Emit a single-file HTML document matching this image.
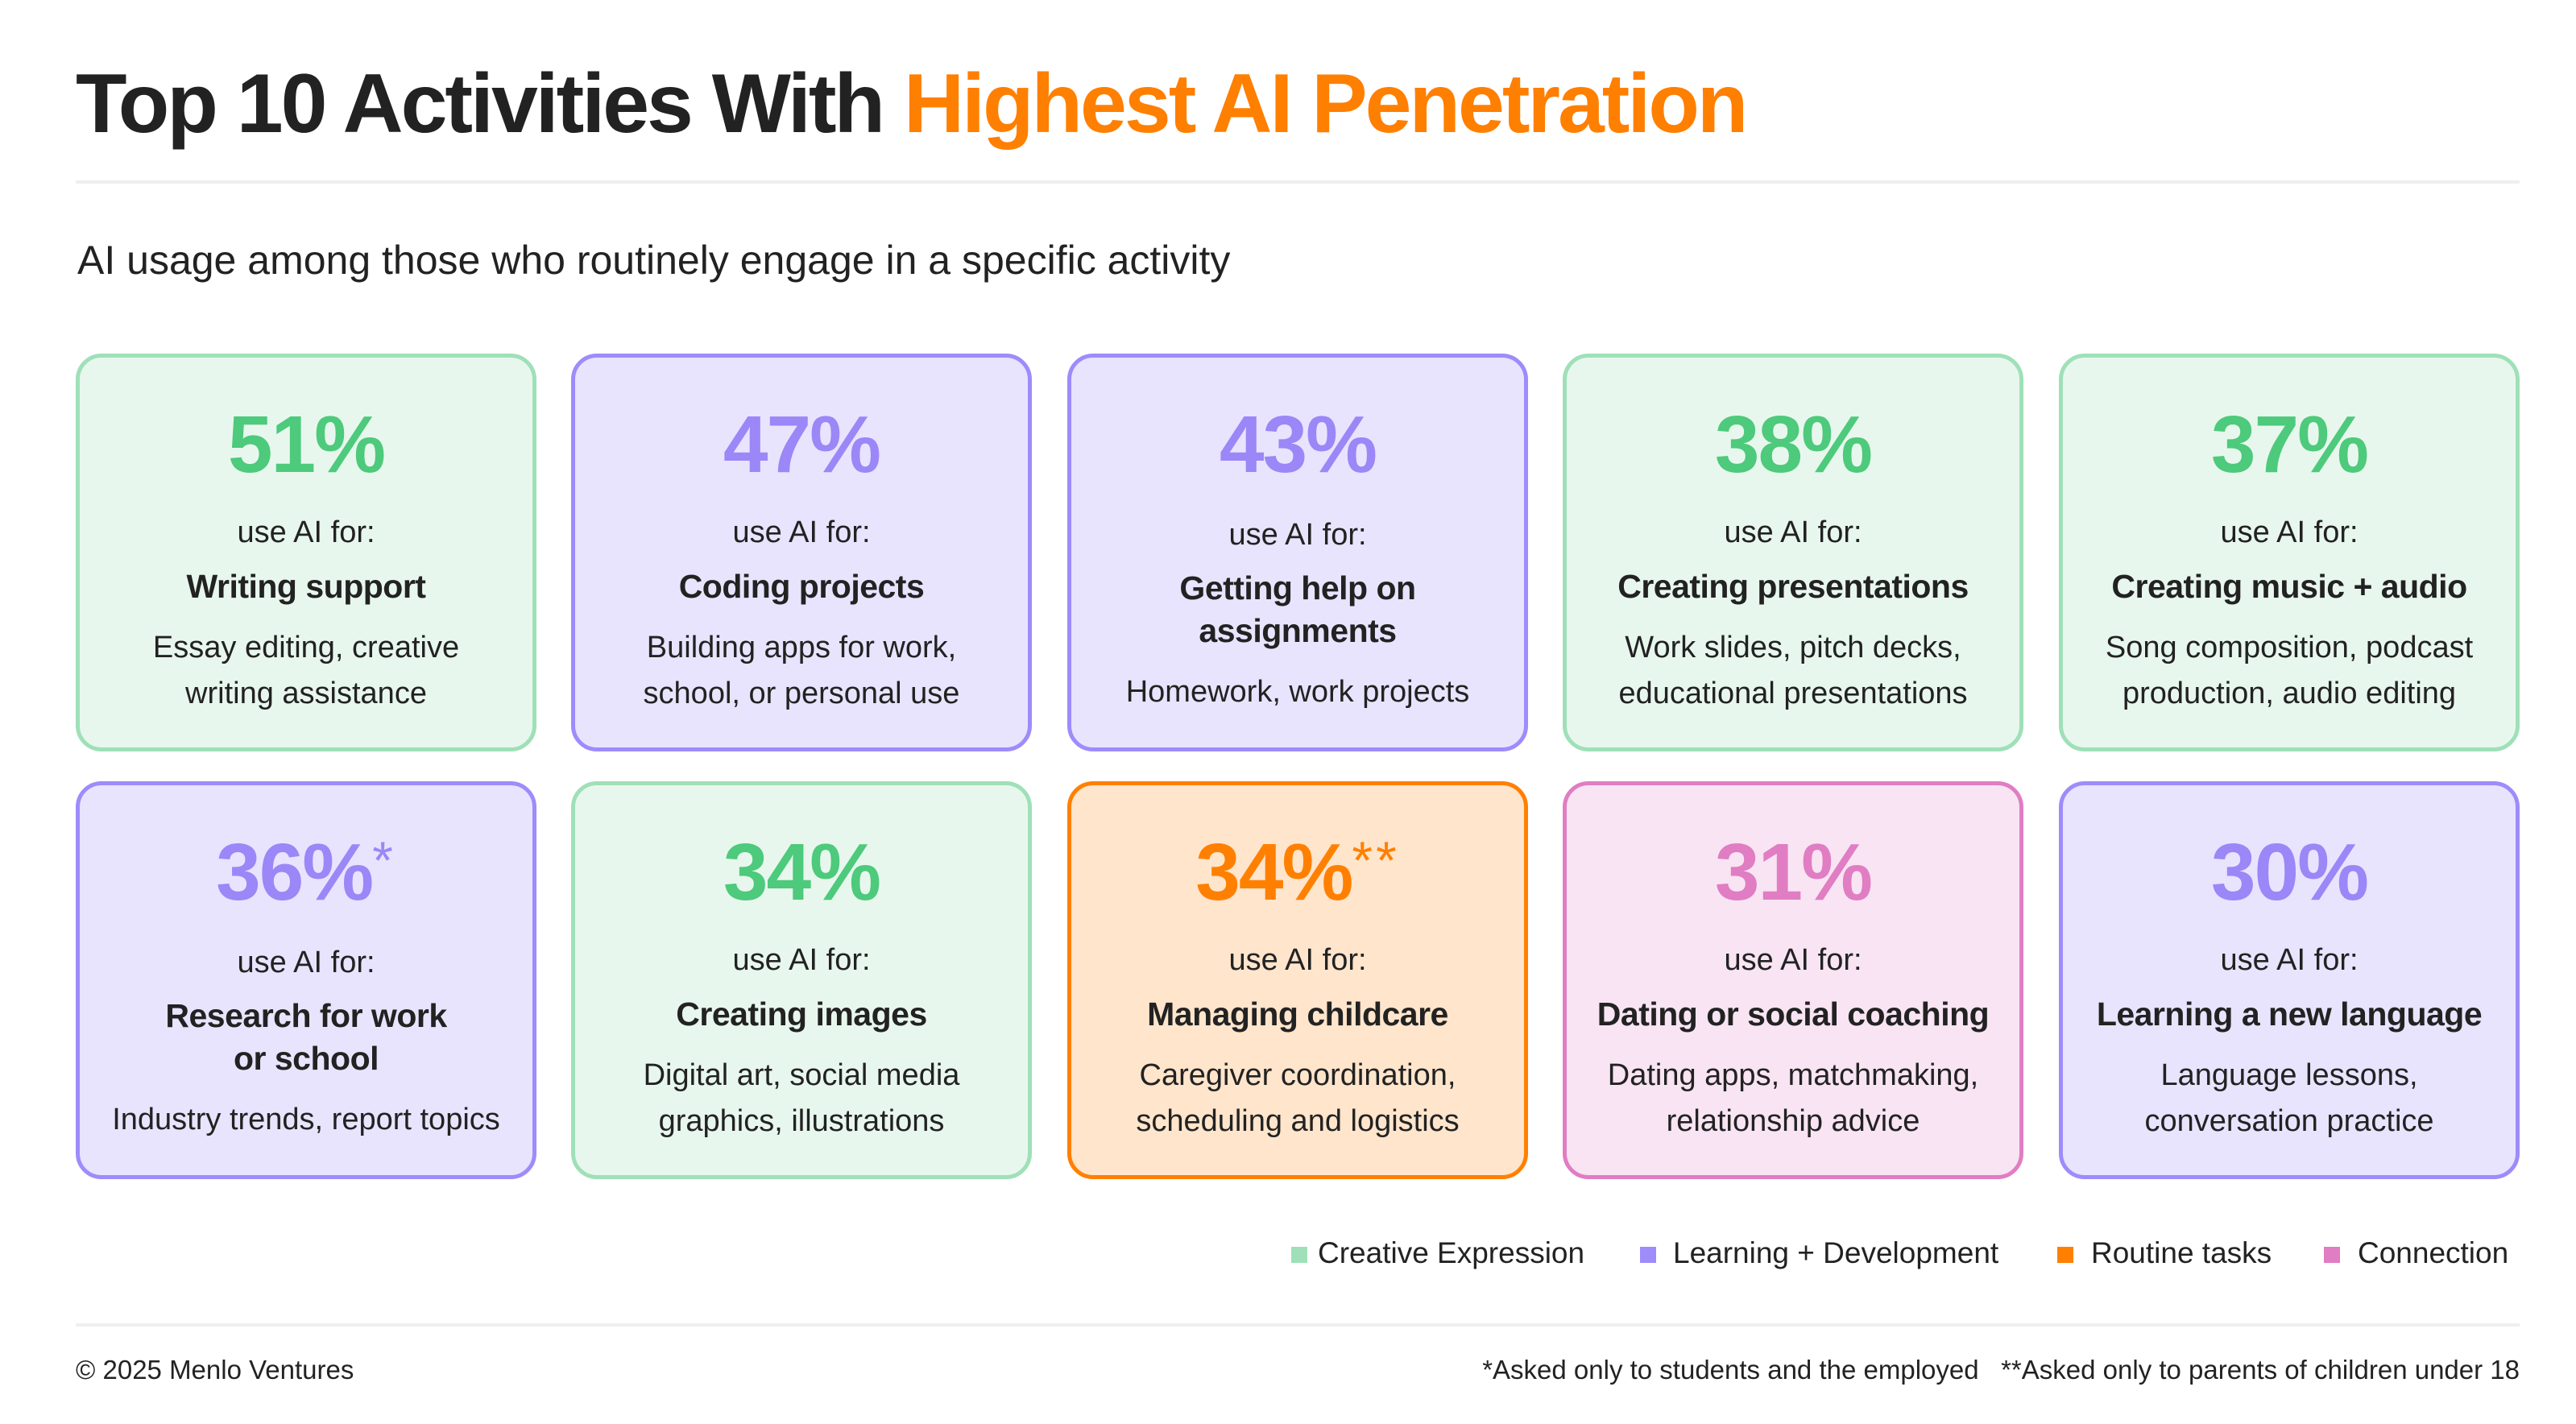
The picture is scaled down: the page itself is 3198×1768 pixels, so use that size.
<!DOCTYPE html>
<html><head><meta charset="utf-8">
<style>
*{margin:0;padding:0;box-sizing:border-box}
body{width:3198px;height:1768px;background:#fff;position:relative;overflow:hidden;font-family:"Liberation Sans",sans-serif;color:#222}
.title{position:absolute;left:94px;top:70px;font-size:104px;font-weight:bold;letter-spacing:-3px;color:#222;white-space:nowrap}
.title span{color:#ff7f00}
.hr{position:absolute;left:94px;width:3034px;height:4px;background:#efefef}
.sub{position:absolute;left:96px;top:294px;font-size:50px;color:#222;white-space:nowrap}
.card{position:absolute;width:572px;height:494px;border:5px solid;border-radius:32px}
.g{background:#e8f7ee;border-color:#9fe0b8}.g .p{color:#4dca7b}
.v{background:#e8e4fe;border-color:#9d8cfa}.v .p{color:#9b87f7}
.o{background:#ffe5cc;border-color:#ff8000}.o .p{color:#ff8000}
.k{background:#f8e4f3;border-color:#e07dc3}.k .p{color:#e07dc3}
.card div{position:absolute;left:0;right:0;text-align:center;white-space:nowrap;height:60px;line-height:60px}
.p{font-size:100px;font-weight:bold;letter-spacing:-2px;top:48px;height:120px!important;line-height:120px!important}
.p sup{font-weight:normal;font-size:66px;vertical-align:top;line-height:90px;letter-spacing:4px}
.u{font-size:38px;top:187px}
.t{font-size:41px;font-weight:bold;letter-spacing:-0.5px}
.d{font-size:38px}
.leg{position:absolute;top:1535px;font-size:37px;white-space:nowrap}
.sq{position:absolute;top:1548px;width:20px;height:20px}
.foot{position:absolute;top:1682px;font-size:33px;white-space:nowrap;color:#222}
</style></head><body>
<div class="title">Top 10 Activities With <span>Highest AI Penetration</span></div>
<div class="hr" style="top:224px"></div>
<div class="sub">AI usage among those who routinely engage in a specific activity</div>

<div class="card g" style="left:94px;top:439px"><div class="p">51%</div><div class="u">use AI for:</div><div class="t" style="top:254px">Writing support</div><div class="d" style="top:330px">Essay editing, creative</div><div class="d" style="top:387px">writing assistance</div></div>
<div class="card v" style="left:709px;top:439px"><div class="p">47%</div><div class="u">use AI for:</div><div class="t" style="top:254px">Coding projects</div><div class="d" style="top:330px">Building apps for work,</div><div class="d" style="top:387px">school, or personal use</div></div>
<div class="card v" style="left:1325px;top:439px"><div class="p">43%</div><div class="u" style="top:190px">use AI for:</div><div class="t" style="top:256px">Getting help on</div><div class="t" style="top:309px">assignments</div><div class="d" style="top:385px">Homework, work projects</div></div>
<div class="card g" style="left:1940px;top:439px"><div class="p">38%</div><div class="u">use AI for:</div><div class="t" style="top:254px">Creating presentations</div><div class="d" style="top:330px">Work slides, pitch decks,</div><div class="d" style="top:387px">educational presentations</div></div>
<div class="card g" style="left:2556px;top:439px"><div class="p">37%</div><div class="u">use AI for:</div><div class="t" style="top:254px">Creating music + audio</div><div class="d" style="top:330px">Song composition, podcast</div><div class="d" style="top:387px">production, audio editing</div></div>

<div class="card v" style="left:94px;top:970px"><div class="p">36%<sup>*</sup></div><div class="u" style="top:190px">use AI for:</div><div class="t" style="top:256px">Research for work</div><div class="t" style="top:309px">or school</div><div class="d" style="top:385px">Industry trends, report topics</div></div>
<div class="card g" style="left:709px;top:970px"><div class="p">34%</div><div class="u">use AI for:</div><div class="t" style="top:254px">Creating images</div><div class="d" style="top:330px">Digital art, social media</div><div class="d" style="top:387px">graphics, illustrations</div></div>
<div class="card o" style="left:1325px;top:970px"><div class="p">34%<sup>**</sup></div><div class="u">use AI for:</div><div class="t" style="top:254px">Managing childcare</div><div class="d" style="top:330px">Caregiver coordination,</div><div class="d" style="top:387px">scheduling and logistics</div></div>
<div class="card k" style="left:1940px;top:970px"><div class="p">31%</div><div class="u">use AI for:</div><div class="t" style="top:254px">Dating or social coaching</div><div class="d" style="top:330px">Dating apps, matchmaking,</div><div class="d" style="top:387px">relationship advice</div></div>
<div class="card v" style="left:2556px;top:970px"><div class="p">30%</div><div class="u">use AI for:</div><div class="t" style="top:254px">Learning a new language</div><div class="d" style="top:330px">Language lessons,</div><div class="d" style="top:387px">conversation practice</div></div>

<div class="sq" style="left:1603px;background:#9fe0b8"></div><div class="leg" style="left:1636px">Creative Expression</div>
<div class="sq" style="left:2036px;background:#9d8cfa"></div><div class="leg" style="left:2077px">Learning + Development</div>
<div class="sq" style="left:2554px;background:#ff8000"></div><div class="leg" style="left:2596px">Routine tasks</div>
<div class="sq" style="left:2885px;background:#e07dc3"></div><div class="leg" style="left:2927px">Connection</div>

<div class="hr" style="top:1643px"></div>
<div class="foot" style="left:94px">© 2025 Menlo Ventures</div>
<div class="foot" style="right:70px">*Asked only to students and the employed &nbsp;&nbsp;**Asked only to parents of children under 18</div>
</body></html>
